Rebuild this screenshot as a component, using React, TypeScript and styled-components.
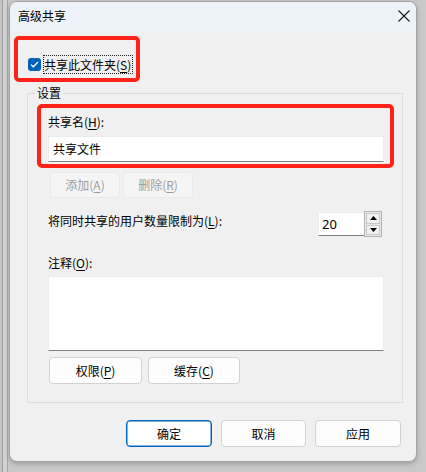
import React from "react";
import styled, { createGlobalStyle, css } from "styled-components";

const Global = createGlobalStyle`
  html, body { margin: 0; padding: 0; }
  body {
    font-family: "Noto Sans CJK SC", "Noto Sans", sans-serif;
    font-size: 12px;
    color: #000;
    background: #c9c9c9;
  }
  * { box-sizing: border-box; }
`;

const Desktop = styled.div`
  width: 426px;
  height: 472px;
  overflow: hidden;
  padding: 1px 0 0 9px;
  background: linear-gradient(
    to right,
    #c4c4c4 0,
    #c4c4c4 2px,
    #9e9e9e 2px,
    #9e9e9e 3px,
    #d2d2d2 3px,
    #d2d2d2 7px,
    #a8a8a8 7px,
    #a8a8a8 8px,
    #c9c9c9 8px
  );
`;

const Window = styled.div`
  width: 408px;
  height: 461px;
  background: #f0f0f0;
  border: 1px solid #a3a3a3;
  border-radius: 8px;
  overflow: hidden;
  display: flex;
  flex-direction: column;
  box-shadow: 0 2px 5px rgba(0, 0, 0, 0.22);
`;

const TitleBar = styled.div`
  height: 30px;
  flex: 0 0 30px;
  background: #eef3f9;
  display: flex;
  align-items: center;
  justify-content: space-between;
  padding-left: 8px;
`;

const Title = styled.span`
  line-height: 16px;
  margin-top: -3px;
`;

const CloseButton = styled.div`
  width: 24px;
  height: 30px;
  display: flex;
  align-items: center;
  justify-content: center;
  margin-top: -2px;
`;

const Body = styled.div`
  flex: 1;
  display: flex;
  flex-direction: column;
  padding: 23px 13px 0 17px;
`;

const Annotated = styled.div<{ $t: number; $r: number; $b: number; $l: number }>`
  position: relative;
  &::after {
    content: "";
    position: absolute;
    top: ${(p) => p.$t}px;
    right: ${(p) => p.$r}px;
    bottom: ${(p) => p.$b}px;
    left: ${(p) => p.$l}px;
    border: 4px solid #fd2319;
    border-radius: 5px;
    pointer-events: none;
  }
`;

const CheckRow = styled.div`
  display: flex;
  align-items: center;
  height: 19px;
  gap: 2px;
`;

const CheckBox = styled.div`
  width: 13px;
  height: 13px;
  border-radius: 3px;
  background: #005fb8;
  display: flex;
  align-items: center;
  justify-content: center;
`;

const FocusLabel = styled.span`
  border: 1px dotted #222;
  line-height: 17px;
  padding: 0 1px 0 0;
`;

const U = styled.span`
  text-decoration: underline;
  text-underline-offset: 2px;
`;

const GroupBox = styled.div`
  position: relative;
  margin-top: 19px;
  border: 1px solid #dcdcdc;
  padding: 20px 18px 18px 20px;
  display: flex;
  flex-direction: column;
`;

const Legend = styled.span`
  position: absolute;
  top: -9px;
  left: 7px;
  padding: 0 2px;
  background: #f0f0f0;
  line-height: 16px;
`;

const Label = styled.div<{ $mt?: number }>`
  line-height: 16px;
  margin-top: ${(p) => p.$mt ?? 0}px;
`;

const fieldCss = css`
  background: #fff;
  border: 1px solid #ececec;
  border-bottom: 1px solid #838383;
`;

const TextField = styled.div`
  ${fieldCss};
  height: 26px;
  margin-top: 6px;
  padding-left: 4px;
  display: flex;
  align-items: center;
  line-height: 16px;
`;

const TextArea = styled.div`
  ${fieldCss};
  height: 75px;
  margin-top: 5px;
`;

const ButtonRow = styled.div<{ $mt: number; $gap: number; $pl?: number }>`
  display: flex;
  gap: ${(p) => p.$gap}px;
  margin-top: ${(p) => p.$mt}px;
  padding-left: ${(p) => p.$pl ?? 0}px;
`;

const Button = styled.div<{ $w: number; $h?: number; $disabled?: boolean; $primary?: boolean }>`
  width: ${(p) => p.$w}px;
  height: ${(p) => p.$h ?? 27}px;
  border-radius: 4px;
  display: flex;
  align-items: center;
  justify-content: center;
  line-height: 16px;
  background: ${(p) => (p.$disabled ? "#f5f5f5" : "#fdfdfd")};
  color: ${(p) => (p.$disabled ? "#9d9d9d" : "#000")};
  border: 1px solid ${(p) => (p.$disabled ? "#e9e9e9" : "#d2d2d2")};
  ${(p) =>
    p.$primary &&
    css`
      border-color: #0067c0;
      box-shadow: inset 0 0 0 0.5px #0067c0;
      background: #fff;
    `}
`;

const LimitRow = styled.div`
  display: flex;
  align-items: flex-start;
  justify-content: space-between;
  margin-top: 13px;
  padding-right: 2px;
`;

const LimitLabel = styled.span`
  line-height: 16px;
  margin-top: 2px;
`;

const Spin = styled.div`
  display: flex;
  align-items: stretch;
  height: 25px;
`;

const SpinInput = styled.div`
  ${fieldCss};
  width: 46px;
  border-right: none;
  padding-left: 3px;
  display: flex;
  align-items: center;
  font-family: "Noto Sans", "Noto Sans CJK SC", sans-serif;
  font-size: 13px;
  margin-top: 1px;
  height: 24px;
`;

const SpinButtons = styled.div`
  width: 18px;
  border: 1px solid #b4b4b4;
  background: #e6e6e6;
  display: flex;
  flex-direction: column;
  gap: 1px;
  padding: 1px;
  height: 26px;
`;

const SpinBtn = styled.div`
  flex: 1;
  background: #f0f0f0;
  border: 1px solid #c9c9c9;
  display: flex;
  align-items: center;
  justify-content: center;
`;

const Footer = styled.div`
  display: flex;
  justify-content: flex-end;
  margin-top: 17px;
  padding-right: 2px;
  gap: 9px;
`;

const Tri = ({ up }: { up?: boolean }) => (
  <svg width="7" height="4" viewBox="0 0 7 4">
    {up ? <path d="M0 4 L3.5 0 L7 4 Z" fill="#000" /> : <path d="M0 0 L3.5 4 L7 0 Z" fill="#000" />}
  </svg>
);

export default function App() {
  return (
    <>
      <Global />
      <Desktop>
        <Window>
          <TitleBar>
            <Title>高级共享</Title>
            <CloseButton>
              <svg width="12" height="12" viewBox="0 0 12 12">
                <path d="M0.5 0.5 L11.5 11.5 M11.5 0.5 L0.5 11.5" stroke="#1a1a1a" strokeWidth="1.1" />
              </svg>
            </CloseButton>
          </TitleBar>
          <Body>
            <Annotated $t={-19} $r={-7} $b={-8} $l={-14} style={{ alignSelf: "flex-start", marginLeft: 1 }}>
              <CheckRow>
                <CheckBox>
                  <svg width="9" height="7" viewBox="0 0 9 7">
                    <path d="M1 3.6 L3.3 5.8 L8 1" stroke="#fff" strokeWidth="1.3" fill="none" />
                  </svg>
                </CheckBox>
                <FocusLabel>
                  共享此文件夹(<U>S</U>)
                </FocusLabel>
              </CheckRow>
            </Annotated>
            <GroupBox>
              <Legend>设置</Legend>
              <Annotated $t={-10} $r={-10} $b={-6} $l={-11}>
                <Label>
                  共享名(<U>H</U>):
                </Label>
                <TextField>共享文件</TextField>
              </Annotated>
              <ButtonRow $mt={10} $gap={3} $pl={2}>
                <Button $w={70} $h={26} $disabled>
                  添加(<U>A</U>)
                </Button>
                <Button $w={70} $h={26} $disabled>
                  删除(<U>R</U>)
                </Button>
              </ButtonRow>
              <LimitRow>
                <LimitLabel>
                  将同时共享的用户数量限制为(<U>L</U>):
                </LimitLabel>
                <Spin>
                  <SpinInput>20</SpinInput>
                  <SpinButtons>
                    <SpinBtn>
                      <Tri up />
                    </SpinBtn>
                    <SpinBtn>
                      <Tri />
                    </SpinBtn>
                  </SpinButtons>
                </Spin>
              </LimitRow>
              <Label $mt={19}>
                注释(<U>O</U>):
              </Label>
              <TextArea />
              <ButtonRow $mt={6} $gap={6} $pl={1}>
                <Button $w={93}>
                  权限(<U>P</U>)
                </Button>
                <Button $w={92}>
                  缓存(<U>C</U>)
                </Button>
              </ButtonRow>
            </GroupBox>
            <Footer>
              <Button $w={86} $primary>
                确定
              </Button>
              <Button $w={85}>取消</Button>
              <Button $w={86}>应用</Button>
            </Footer>
          </Body>
        </Window>
      </Desktop>
    </>
  );
}
